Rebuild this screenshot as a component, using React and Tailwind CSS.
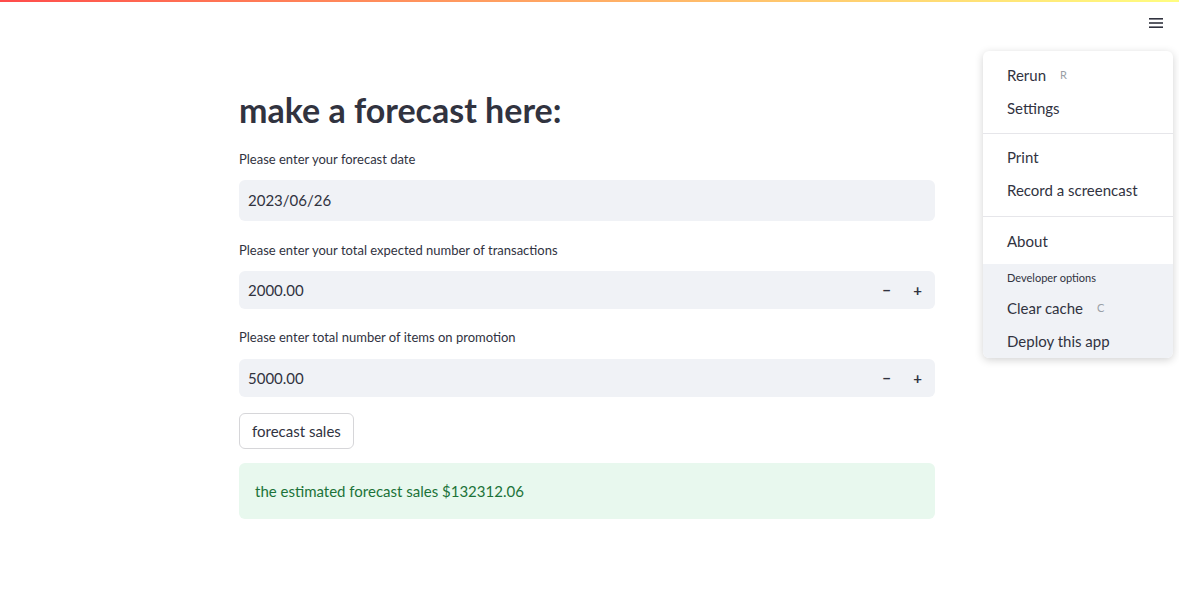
import React from "react";

const font = { fontFamily: '"Source Sans Pro", Lato, "Noto Sans", sans-serif' };

function NumberInput({ value }) {
  return (
    <div className="flex h-[38px] items-center rounded-md bg-[#f0f2f6] pl-[9px] pr-[2px]">
      <span className="flex-1 text-[15px] text-[#31333f]">{value}</span>
      <span className="w-[31px] text-center text-[15px] font-bold text-[#31333f]">−</span>
      <span className="w-[31px] text-center text-[15px] font-bold text-[#31333f]">+</span>
    </div>
  );
}

export default function App() {
  return (
    <div className="relative min-h-[599px] w-full bg-white text-[#31333f]" style={font}>
      <div className="h-[2px] w-full bg-gradient-to-r from-[#ff4b4b] to-[#fffd80]" />
      <div className="absolute right-[15px] top-[16px]">
        <svg width="16" height="14" viewBox="0 0 16 14">
          <rect x="1" y="2" width="14" height="1.6" fill="#31333f" />
          <rect x="1" y="6.2" width="14" height="1.6" fill="#31333f" />
          <rect x="1" y="10.4" width="14" height="1.6" fill="#31333f" />
        </svg>
      </div>

      <div className="ml-[239px] w-[696px] pt-[86px]">
        <h1 className="text-[34px] font-bold leading-[44px] text-[#31333f]">make a forecast here:</h1>
        <div className="mt-[19px] text-[13px] leading-[16px]">Please enter your forecast date</div>
        <div className="mt-[13px] flex h-[41px] items-center rounded-md bg-[#f0f2f6] px-[9px] text-[15px]">2023/06/26</div>
        <div className="mt-[21px] text-[13px] leading-[16px]">Please enter your total expected number of transactions</div>
        <div className="mt-[13px]"><NumberInput value="2000.00" /></div>
        <div className="mt-[20px] text-[13px] leading-[16px]">Please enter total number of items on promotion</div>
        <div className="mt-[14px]"><NumberInput value="5000.00" /></div>
        <button className="mt-[16px] h-[36px] rounded-md border border-[#d6d6d9] bg-white px-[12px] text-[15px] text-[#31333f]">forecast sales</button>
        <div className="mt-[14px] flex h-[56px] items-center rounded-md bg-[#e8f8ee] px-[16px] text-[15px] text-[#1c7339]">
          the estimated forecast sales $132312.06
        </div>
      </div>

      <div className="absolute left-[983px] top-[51px] w-[190px] overflow-hidden rounded-md bg-white shadow-[0_2px_8px_rgba(0,0,0,0.18)]">
        <div className="pb-[8px] pt-[8px]">
          <div className="flex h-[33px] items-center px-[24px] text-[15px]">Rerun<span className="ml-[14px] text-[11px] text-[#9aa0a6]">R</span></div>
          <div className="flex h-[33px] items-center px-[24px] text-[15px]">Settings</div>
        </div>
        <div className="h-px bg-[#e6e6ea]" />
        <div className="pb-[9px] pt-[7px]">
          <div className="flex h-[33px] items-center px-[24px] text-[15px]">Print</div>
          <div className="flex h-[33px] items-center px-[24px] text-[15px]">Record a screencast</div>
        </div>
        <div className="h-px bg-[#e6e6ea]" />
        <div className="pt-[8px] pb-[6px]">
          <div className="flex h-[33px] items-center px-[24px] text-[15px]">About</div>
        </div>
        <div className="bg-[#f0f2f6] pt-[2px]">
          <div className="flex h-[24px] items-center px-[24px] text-[11px]">Developer options</div>
          <div className="mt-[2px] flex h-[33px] items-center px-[24px] text-[15px]">Clear cache<span className="ml-[14px] text-[11px] text-[#9aa0a6]">C</span></div>
          <div className="flex h-[33px] items-center px-[24px] text-[15px]">Deploy this app</div>
        </div>
      </div>
    </div>
  );
}
